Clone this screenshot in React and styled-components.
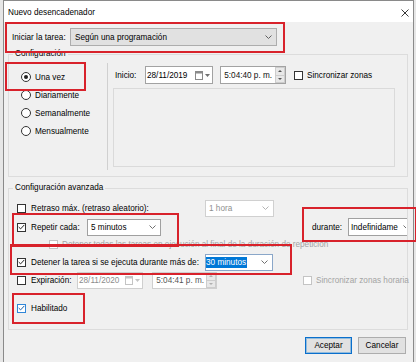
import React from 'react'
import styled, { createGlobalStyle } from 'styled-components'

const GlobalStyle = createGlobalStyle`
  * { box-sizing: border-box; }
  html, body { margin: 0; padding: 0; }
  body {
    background: #e6e6e6;
    font-family: "Liberation Sans", Arial, sans-serif;
    font-size: 8.2px;
    color: #000;
  }
`

const Page = styled.div`
  width: 416px;
  height: 362px;
  overflow: hidden;
  padding-left: 3px;
`

const Dialog = styled.div`
  width: 411px;
  height: 380px;
  border: 1px solid #8a8a8a;
  background: #f0f0f0;
`

const TitleBar = styled.div`
  display: flex;
  align-items: center;
  height: 21px;
  padding: 2px 4px 0 4px;
  background: #fff;
`

const Title = styled.span`
  flex: 1;
`

const Body = styled.div`
  padding: 6px 5px 0 4px;
`

const Row = styled.div`
  display: flex;
  align-items: center;
  height: ${p => p.$h || 18}px;
  margin-top: ${p => p.$mt || 0}px;
  margin-left: ${p => p.$ml || 0};
  padding-left: ${p => p.$pl || 0}px;
`

// red annotation frame drawn over the wrapped row
const Mark = styled(Row)`
  position: relative;
  &::after {
    content: '';
    position: absolute;
    left: ${p => p.$l}px;
    top: ${p => p.$t}px;
    width: ${p => p.$w}px;
    height: ${p => p.$hh}px;
    border: 2px solid #d8222b;
    pointer-events: none;
    z-index: 3;
  }
`

const Label = styled.span`
  flex: none;
  width: ${p => (p.$w ? `${p.$w}px` : 'auto')};
  margin-left: ${p => p.$ml || 0}px;
  color: ${p => (p.$off ? '#a3a3a3' : '#000')};
  white-space: nowrap;
`

const comboBorder = { list: '#adadad', edit: '#a0a0a0', off: '#d0d0d0', focus: '#8aa7c9' }

const Combo = styled.div`
  flex: none;
  display: flex;
  align-items: center;
  width: ${p => p.$w}px;
  height: ${p => p.$h || 18}px;
  padding: 0 ${p => (p.$open ? 1 : 4)}px 0 ${p => p.$pl ?? 3}px;
  border: 1px solid ${p => comboBorder[p.$kind]};
  border-right-width: ${p => (p.$open ? 0 : 1)}px;
  background: ${p => (p.$kind === 'list' ? '#e1e1e1' : '#fff')};
  color: ${p => (p.$kind === 'off' ? '#8f8f8f' : '#000')};
`

const ComboText = styled.span`
  flex: 1;
  white-space: nowrap;
`

const Selected = styled.span`
  background: #0078d7;
  color: #fff;
  padding: 1px 1px 1px 0;
`

const ChevronSvg = styled.svg`
  flex: none;
  margin-left: 2px;
`

const Chevron = ({ color = '#606060', cut }) => (
  <ChevronSvg width={cut ? 3 : 7} height="4" viewBox={cut ? '0 0 3 4' : '0 0 7 4'}>
    <polyline points="0.5,0.5 3.5,3.5 6.5,0.5" fill="none" stroke={color} strokeWidth="1" />
  </ChevronSvg>
)

const Field = styled.div`
  flex: none;
  display: flex;
  align-items: center;
  width: ${p => p.$w}px;
  height: ${p => p.$h || 18}px;
  margin-left: ${p => p.$ml || 0}px;
  padding-left: 1px;
  border: 1px solid ${p => (p.$off ? '#cfcfcf' : '#a2a2a2')};
  background: #fff;
  color: ${p => p.$tc || '#000'};
  white-space: nowrap;
`

const Cal = styled.svg`
  flex: none;
  margin-left: auto;
`

const CalIcon = ({ off }) => (
  <>
    <Cal width="8" height="9" viewBox="0 0 8 9">
      <rect x="0.5" y="0.5" width="7" height="8" fill="#fff" stroke={off ? '#c4c4c4' : '#8a8a8a'} />
      <rect x="0.5" y="0.5" width="7" height="2" fill={off ? '#c4c4c4' : '#8a8a8a'} />
    </Cal>
    <ChevronSvg width="5" height="3" viewBox="0 0 5 3" style={{ marginRight: 2 }}>
      <polygon points="0,0 5,0 2.5,3" fill={off ? '#c4c4c4' : '#707070'} />
    </ChevronSvg>
  </>
)

const Spinner = styled.div`
  flex: none;
  display: flex;
  flex-direction: column;
  width: 10px;
  height: 16px;
  margin-left: auto;
`

const SpinBtn = styled.div`
  flex: 1;
  display: flex;
  align-items: center;
  justify-content: center;
  background: #e8e8e8;
  border: 1px solid #cdcdcd;
  & + & { border-top: none; }
`

const Tri = ({ up, off }) => (
  <svg width="4" height="2" viewBox="0 0 4 2">
    <polygon points={up ? '0,2 4,2 2,0' : '0,0 4,0 2,2'} fill={off ? '#b0b0b0' : '#555'} />
  </svg>
)

const Spin = ({ off }) => (
  <Spinner>
    <SpinBtn><Tri up off={off} /></SpinBtn>
    <SpinBtn><Tri off={off} /></SpinBtn>
  </Spinner>
)

const boxBorder = { dark: '#333', blue: '#2f86d8', off: '#c4c4c4' }

const Box = styled.span`
  flex: none;
  display: inline-flex;
  align-items: center;
  justify-content: center;
  width: 9px;
  height: 9px;
  margin-left: ${p => p.$ml || 0}px;
  margin-right: ${p => p.$mr ?? 5}px;
  border: 1px solid ${p => boxBorder[p.$tone || 'dark']};
  background: #fff;
`

const Check = ({ checked, tone, ml, mr }) => (
  <Box $tone={tone} $ml={ml} $mr={mr}>
    {checked && (
      <svg width="7" height="6" viewBox="0 0 7 6">
        <polyline
          points="0.7,3 2.6,4.9 6.3,0.9"
          fill="none"
          stroke={tone === 'blue' ? '#1c5fa6' : '#222'}
          strokeWidth="1"
        />
      </svg>
    )}
  </Box>
)

const Radio = styled.span`
  flex: none;
  display: inline-flex;
  align-items: center;
  justify-content: center;
  width: 10px;
  height: 10px;
  margin-right: 4px;
  border: 1px solid #333;
  border-radius: 50%;
  background: #fff;
  &::after {
    content: '';
    width: 4px;
    height: 4px;
    border-radius: 50%;
    background: ${p => (p.$on ? '#222' : 'transparent')};
  }
`

const Group = styled.fieldset`
  width: 400px;
  min-width: 0;
  margin: ${p => p.$mt}px 0 0 0;
  padding: 0 0 ${p => p.$pb}px 0;
  border: 1px solid #dcdcdc;
`

const Legend = styled.legend`
  margin-left: 4px;
  padding: 0 2px;
  line-height: 12px;
`

const Split = styled.div`
  display: flex;
  align-items: flex-start;
`

const RadioCol = styled.div`
  display: flex;
  flex-direction: column;
  width: 98px;
  padding: 8px 0 0 12px;
`

const VRule = styled.div`
  width: 1px;
  height: 107px;
  margin-top: 3px;
  background: #d0d0d0;
`

const RightCol = styled.div`
  padding-left: 5px;
`

const Panel = styled.div`
  width: 282px;
  height: 79px;
  margin-top: 4px;
  border: 1px solid #dadada;
`

const Footer = styled.div`
  display: flex;
  justify-content: flex-end;
  gap: 6px;
  margin-top: 7px;
  padding-right: 2px;
`

const Button = styled.button`
  width: ${p => p.$w}px;
  height: 17px;
  padding: 0;
  font: inherit;
  color: #000;
  background: #e1e1e1;
  border: 1px solid ${p => (p.$default ? '#0a6fcc' : '#adadad')};
  box-shadow: ${p => (p.$default ? 'inset 0 0 0 1px rgba(0,120,215,0.35)' : 'none')};
`

const App = () => (
  <>
    <GlobalStyle />
    <Page>
      <Dialog>
        <TitleBar>
          <Title>Nuevo desencadenador</Title>
          <svg width="8" height="8" viewBox="0 0 8 8">
            <path d="M0.5 0.5 L7.5 7.5 M7.5 0.5 L0.5 7.5" stroke="#222" strokeWidth="0.9" />
          </svg>
        </TitleBar>

        <Body>
          <Mark $pl={4} $l={-3} $t={-6} $w={276} $hh={27}>
            <Label $w={58}>Iniciar la tarea:</Label>
            <Combo $kind="list" $w={207} $pl={4}>
              <ComboText>Según una programación</ComboText>
              <Chevron />
            </Combo>
          </Mark>

          <Group $mt={2} $pb={6}>
            <Legend>Configuración</Legend>
            <Split>
              <RadioCol>
                <Mark $l={-16} $t={-6} $w={77} $hh={25}>
                  <Radio $on />Una vez
                </Mark>
                <Row><Radio />Diariamente</Row>
                <Row><Radio />Semanalmente</Row>
                <Row><Radio />Mensualmente</Row>
              </RadioCol>
              <VRule />
              <RightCol>
                <Row $mt={6}>
                  <Label $ml={2} $w={30}>Inicio:</Label>
                  <Field $w={68}>
                    28/11/2019
                    <CalIcon />
                  </Field>
                  <Field $w={66} $ml={7} $tc="#111">
                    &nbsp;5:04:40 p. m.
                    <Spin />
                  </Field>
                  <Check ml={8} mr={4} />
                  <Label>Sincronizar zonas</Label>
                </Row>
                <Panel />
              </RightCol>
            </Split>
          </Group>

          <Group $mt={5} $pb={12}>
            <Legend>Configuración avanzada</Legend>
            <Row $mt={5} $pl={8}>
              <Check />
              <Label $w={174}>Retraso máx. (retraso aleatorio):</Label>
              <Combo $kind="off" $w={69} $h={17}>
                <ComboText>1 hora</ComboText>
                <Chevron color="#b4b4b4" />
              </Combo>
            </Row>
            <Row $mt={1} $pl={8}>
              <Mark $l={-5} $t={-5} $w={163} $hh={30}>
                <Check checked />
                <Label $w={56}>Repetir cada:</Label>
                <Combo $kind="edit" $w={74} $h={17}>
                  <ComboText>5 minutos</ComboText>
                  <Chevron color="#707070" />
                </Combo>
              </Mark>
              <Mark $ml="auto" $l={-10} $t={-11} $w={111} $hh={31}>
                <Label $w={36}>durante:</Label>
                <Combo $kind="edit" $w={59} $pl={2} $open>
                  <ComboText>Indefinidame</ComboText>
                  <Chevron color="#707070" cut />
                </Combo>
              </Mark>
            </Row>
            <Row $h={17} $pl={40}>
              <Check tone="off" mr={4} />
              <Label $off>Detener todas las tareas en ejecución al final de la duración de repetición</Label>
            </Row>
            <Mark $pl={8} $l={1} $t={-9} $w={278} $hh={27}>
              <Check checked />
              <Label $w={174}>Detener la tarea si se ejecuta durante más de:</Label>
              <Combo $kind="focus" $w={68} $h={17} $pl={0}>
                <ComboText><Selected>30 minutos</Selected></ComboText>
                <Chevron color="#707070" />
              </Combo>
            </Mark>
            <Row $pl={8}>
              <Check />
              <Label $w={46}>Expiración:</Label>
              <Field $w={66} $h={17} $off $tc="#8c8c8c">
                28/11/2020
                <CalIcon off />
              </Field>
              <Field $w={65} $h={17} $ml={9} $off $tc="#555">
                &nbsp;5:04:41 p. m.
                <Spin off />
              </Field>
              <Check tone="off" ml={86} mr={4} />
              <Label $off>Sincronizar zonas horaria</Label>
            </Row>
            <Mark $mt={10} $pl={8} $l={3} $t={-6} $w={69} $hh={27}>
              <Check checked tone="blue" />
              <Label>Habilitado</Label>
            </Mark>
          </Group>

          <Footer>
            <Button $w={47} $default>Aceptar</Button>
            <Button $w={48}>Cancelar</Button>
          </Footer>
        </Body>
      </Dialog>
    </Page>
  </>
)

export default App
